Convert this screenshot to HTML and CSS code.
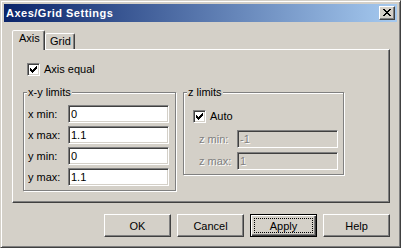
FILE: index.html
```html
<!DOCTYPE html>
<html>
<head>
<meta charset="utf-8">
<link rel="stylesheet" href="styles.css">
</head>
<body>
<div class="window">
  <div class="titlebar">
    <span class="title">Axes/Grid Settings</span>
    <span class="close"><svg width="8" height="7" viewBox="0 0 8 7"><path d="M0 0h2v1h-2zM6 0h2v1h-2zM1 1h2v1h-2zM5 1h2v1h-2zM2 2h4v1h-4zM3 3h2v1h-2zM2 4h4v1h-4zM1 5h2v1h-2zM5 5h2v1h-2zM0 6h2v1h-2zM6 6h2v1h-2z" fill="#000"/></svg></span>
  </div>
  <div class="body">
    <div class="tabs">
      <div class="tab active">Axis</div>
      <div class="tab">Grid</div>
    </div>
    <div class="panel">
      <div class="check-row axis-eq">
        <span class="cb"><svg width="11" height="11" viewBox="1 1 11 11"><path d="M9 3h1v1h-1zM8 4h2v1h-2zM3 5h1v1h-1zM7 5h3v1h-3zM3 6h2v1h-2zM6 6h3v1h-3zM3 7h5v1h-5zM4 8h3v1h-3zM5 9h1v1h-1z" fill="#000"/></svg></span>
        <span>Axis equal</span>
      </div>
      <div class="groups">
        <div class="group xy">
          <div class="group-title">x-y limits</div>
          <div class="fields">
            <div class="field"><span class="lbl">x min:</span><span class="edit">0</span></div>
            <div class="field"><span class="lbl">x max:</span><span class="edit">1.1</span></div>
            <div class="field"><span class="lbl">y min:</span><span class="edit">0</span></div>
            <div class="field"><span class="lbl">y max:</span><span class="edit">1.1</span></div>
          </div>
        </div>
        <div class="group z">
          <div class="group-title">z limits</div>
          <div class="check-row auto">
            <span class="cb"><svg width="11" height="11" viewBox="1 1 11 11"><path d="M9 3h1v1h-1zM8 4h2v1h-2zM3 5h1v1h-1zM7 5h3v1h-3zM3 6h2v1h-2zM6 6h3v1h-3zM3 7h5v1h-5zM4 8h3v1h-3zM5 9h1v1h-1z" fill="#000"/></svg></span>
            <span>Auto</span>
          </div>
          <div class="fields zf">
            <div class="field"><span class="lbl dis">z min:</span><span class="edit disabled">-1</span></div>
            <div class="field"><span class="lbl dis">z max:</span><span class="edit disabled">1</span></div>
          </div>
        </div>
      </div>
    </div>
    <div class="buttons">
      <button class="btn">OK</button>
      <button class="btn">Cancel</button>
      <button class="btn default"><span class="focus">Apply</span></button>
      <button class="btn">Help</button>
    </div>
  </div>
</div>
</body>
</html>
```

FILE: styles.css
```css
body {
  margin: 0;
  font-family: "Liberation Sans", Arial, sans-serif;
  font-size: 11px;
  color: #000;
}

.window {
  width: 401px;
  height: 248px;
  box-sizing: border-box;
  background: #d4d0c8;
  border: 1px solid;
  border-color: #d4d0c8 #404040 #404040 #d4d0c8;
  box-shadow: inset 1px 1px #fff, inset -1px -1px #808080;
  padding: 3px;
  display: flex;
  flex-direction: column;
}

.titlebar {
  height: 18px;
  display: flex;
  align-items: center;
  justify-content: space-between;
  background: linear-gradient(to right, #0a246a, #a6caf0);
  padding: 0 2px;
}

.title {
  color: #fff;
  font-weight: bold;
  font-size: 11px;
  letter-spacing: 0.5px;
  line-height: 13px;
}

.close {
  width: 16px;
  height: 14px;
  box-sizing: border-box;
  background: #d4d0c8;
  border: 1px solid;
  border-color: #fff #404040 #404040 #fff;
  box-shadow: inset -1px -1px #808080;
  display: flex;
  align-items: center;
  justify-content: center;
  padding: 0 1px 1px 0;
}

.close svg {
  display: block;
}

.body {
  padding: 8px 7px 0 8px;
}

.tabs {
  display: flex;
  align-items: flex-end;
  height: 19px;
}

.tab {
  box-sizing: border-box;
  height: 16px;
  width: 30px;
  padding: 1px 0 0 4px;
  line-height: 13px;
  background: #d4d0c8;
  border: 1px solid;
  border-bottom: none;
  border-color: #fff #404040 transparent #fff;
  box-shadow: inset -1px 0 #808080;
  border-radius: 2px 2px 0 0;
}

.tab.active {
  height: 20px;
  width: 33px;
  padding-left: 6px;
  margin-bottom: -1px;
  position: relative;
  z-index: 1;
}

.panel {
  box-sizing: border-box;
  width: 378px;
  height: 154px;
  border: 1px solid;
  border-color: #fff #404040 #404040 #fff;
  box-shadow: inset -1px -1px #808080;
  padding: 13px 10px 0 10px;
}

.check-row {
  display: flex;
  align-items: center;
  gap: 4px;
  height: 13px;
  line-height: 13px;
}

.axis-eq {
  margin-left: 4px;
}

.cb {
  width: 13px;
  height: 13px;
  box-sizing: border-box;
  background: #fff;
  border: 1px solid;
  border-color: #808080 #fff #fff #808080;
  box-shadow: inset 1px 1px #404040, inset -1px -1px #d4d0c8;
}

.cb svg {
  display: block;
}

.groups {
  display: flex;
  align-items: flex-start;
  gap: 7px;
  margin-top: 16px;
}

.group {
  box-sizing: border-box;
  border: 1px solid #808080;
  box-shadow: 1px 1px 0 #fff, inset 1px 1px 0 #fff;
}

.group.xy {
  width: 153px;
  height: 99px;
}

.group.z {
  width: 161px;
  height: 83px;
}

.group-title {
  width: fit-content;
  margin: -7px 0 0 3px;
  padding: 0 1px;
  line-height: 13px;
  background: #d4d0c8;
}

.fields {
  display: flex;
  flex-direction: column;
  gap: 3px;
  margin-top: 6px;
  padding-left: 4px;
}

.field {
  display: flex;
  align-items: center;
  height: 18px;
}

.lbl {
  width: 40px;
}

.edit {
  box-sizing: border-box;
  width: 101px;
  height: 18px;
  line-height: 14px;
  padding: 1px 0 0 2px;
  background: #fff;
  border: 1px solid;
  border-color: #808080 #fff #fff #808080;
  box-shadow: inset 1px 1px #404040, inset -1px -1px #d4d0c8;
}

.auto {
  margin: 11px 0 0 9px;
}

.fields.zf {
  margin-top: 7px;
  padding-left: 15px;
  gap: 4px;
}

.zf .lbl {
  width: 38px;
}

.dis,
.edit.disabled {
  color: #808080;
  text-shadow: 1px 1px 0 #fff;
}

.edit.disabled {
  background: #d4d0c8;
}

.buttons {
  display: flex;
  justify-content: flex-end;
  gap: 6px;
  margin-top: 11px;
}

.btn {
  box-sizing: border-box;
  width: 67px;
  height: 23px;
  margin: 0;
  padding: 0;
  font-family: inherit;
  font-size: 11px;
  color: #000;
  background: #d4d0c8;
  border: 1px solid;
  border-color: #fff #404040 #404040 #fff;
  box-shadow: inset -1px -1px #808080;
  border-radius: 0;
}

.btn.default {
  border-color: #000;
  box-shadow: inset 1px 1px #fff, inset -1px -1px #404040, inset -2px -2px #808080;
  padding: 3px;
}

.focus {
  display: flex;
  align-items: center;
  justify-content: center;
  height: 100%;
  box-sizing: border-box;
  border: 1px dotted #000;
}
```
